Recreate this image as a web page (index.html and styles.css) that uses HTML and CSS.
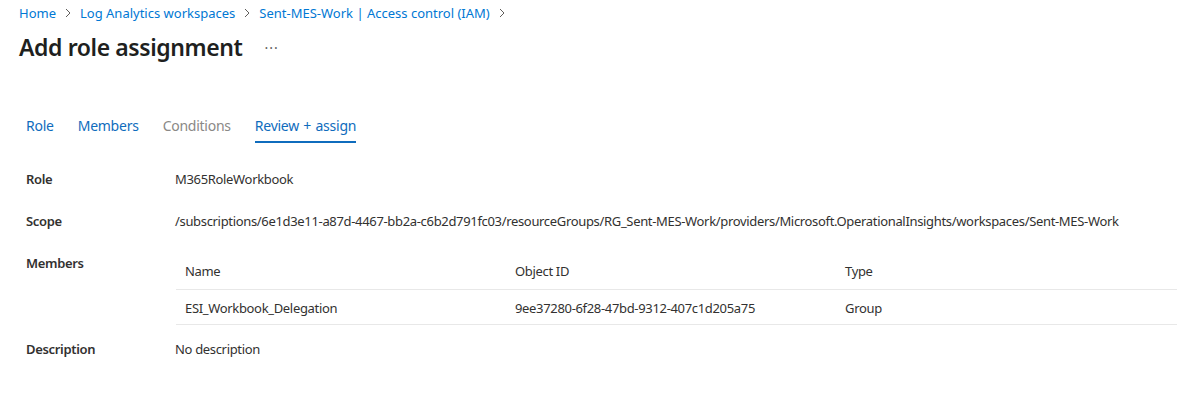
FILE: index.html
```html
<!DOCTYPE html>
<html lang="en">
<head>
<meta charset="utf-8">
<title>Add role assignment</title>
<link rel="stylesheet" href="styles.css">
</head>
<body>
<div class="page">
  <nav class="crumbs">
    <a class="crumb">Home</a>
    <svg class="chev" width="6" height="10" viewBox="0 0 6 10"><path d="M1 1l4 4-4 4" fill="none" stroke="#605e5c" stroke-width="1"/></svg>
    <a class="crumb">Log Analytics workspaces</a>
    <svg class="chev" width="6" height="10" viewBox="0 0 6 10"><path d="M1 1l4 4-4 4" fill="none" stroke="#605e5c" stroke-width="1"/></svg>
    <a class="crumb">Sent-MES-Work | Access control (IAM)</a>
    <svg class="chev" width="6" height="10" viewBox="0 0 6 10"><path d="M1 1l4 4-4 4" fill="none" stroke="#605e5c" stroke-width="1"/></svg>
  </nav>
  <div class="titlebar">
    <h1 class="title">Add role assignment</h1>
    <span class="more">&middot;&middot;&middot;</span>
  </div>
  <div class="tabs">
    <div class="tab">Role</div>
    <div class="tab">Members</div>
    <div class="tab disabled">Conditions</div>
    <div class="tab active">Review + assign</div>
  </div>
  <div class="details">
    <div class="row">
      <div class="label">Role</div>
      <div class="value">M365RoleWorkbook</div>
    </div>
    <div class="row">
      <div class="label">Scope</div>
      <div class="value">/subscriptions/6e1d3e11-a87d-4467-bb2a-c6b2d791fc03/resourceGroups/RG_Sent-MES-Work/providers/Microsoft.OperationalInsights/workspaces/Sent-MES-Work</div>
    </div>
    <div class="row members">
      <div class="label">Members</div>
      <div class="table">
        <div class="tr head">
          <div class="td">Name</div>
          <div class="td">Object ID</div>
          <div class="td">Type</div>
        </div>
        <div class="tr">
          <div class="td">ESI_Workbook_Delegation</div>
          <div class="td">9ee37280-6f28-47bd-9312-407c1d205a75</div>
          <div class="td">Group</div>
        </div>
      </div>
    </div>
    <div class="row">
      <div class="label">Description</div>
      <div class="value">No description</div>
    </div>
  </div>
</div>
</body>
</html>
```
FILE: styles.css
```css
* { box-sizing: border-box; }
html, body { margin: 0; padding: 0; background: #ffffff; }
body {
  font-family: "Noto Sans", "Open Sans", sans-serif;
  color: #323130;
  font-size: 13px;
}
.page { padding: 0 0 0 19px; }
.crumbs {
  display: flex;
  align-items: center;
  height: 26px;
  gap: 9px;
  font-size: 13px;
}
.crumb { color: #0078d4; text-decoration: none; line-height: 18px; }
.chev { display: block; }
.titlebar {
  display: flex;
  align-items: center;
  height: 42px;
}
.title {
  margin: 0;
  font-size: 23px;
  font-weight: 600;
  letter-spacing: -0.4px;
  line-height: 42px;
  color: #201f1e;
}
.more {
  margin-left: 22px;
  font-size: 14px;
  color: #605e5c;
  letter-spacing: 1px;
}
.tabs {
  display: flex;
  gap: 24px;
  margin-top: 42px;
  padding-left: 7px;
}
.tab {
  font-size: 14px;
  letter-spacing: -0.25px;
  word-spacing: 1px;
  line-height: 20px;
  padding: 6px 0 5px;
  border-bottom: 2px solid transparent;
  color: #0f6cbd;
}
.tab.disabled { color: #8a8886; }
.tab.active { border-bottom-color: #0f6cbd; }
.details {
  margin-top: 26px;
  padding-left: 7px;
  display: flex;
  flex-direction: column;
  gap: 22px;
  letter-spacing: -0.33px;
}
.row {
  display: flex;
  line-height: 20px;
}
.label {
  width: 149px;
  flex: none;
  font-weight: 600;
  color: #323130;
}
.value { white-space: nowrap; color: #323130; }
.members { margin-bottom: -8px; }
.table { width: 1001px; margin-left: 1px; }
.tr {
  display: flex;
  border-bottom: 1px solid #e8e8e8;
}
.tr.head .td { padding: 8px 9px 8px; }
.td {
  width: 330px;
  padding: 8px 9px 6px;
  white-space: nowrap;
}
```
